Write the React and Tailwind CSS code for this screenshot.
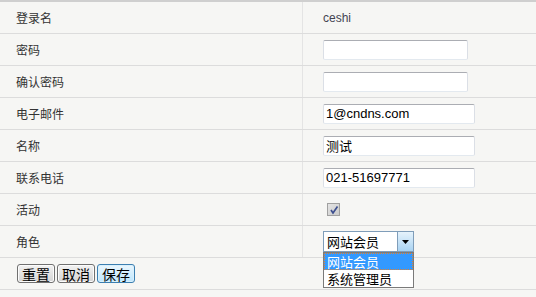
import React from "react";

const cjk = { fontFamily: '"Noto Sans CJK SC", "Liberation Sans", sans-serif' };

function Input({ value, w }) {
  return (
    <div
      className={`h-[20px] ${w} flex items-center rounded-[2px] border border-t-[#abadb3] border-l-[#dbdfe6] border-r-[#dbdfe6] border-b-[#e3e9ef] bg-white px-[2px] text-[13px] leading-none text-black`}
      style={{ fontFamily: '"Liberation Sans", "Noto Sans CJK SC", sans-serif' }}
    >
      {value}
    </div>
  );
}

function Row({ label, children }) {
  return (
    <div className="flex h-[32px] border-b border-[#dcdcdc]">
      <div className="flex w-[303px] items-center border-r border-[#e4e4e4] pl-4 text-[12px] text-[#333]" style={cjk}>
        {label}
      </div>
      <div className="relative flex flex-1 items-center pl-5">{children}</div>
    </div>
  );
}

function Btn({ children, focus }) {
  return (
    <button
      className={`h-[19px] rounded-[3px] border px-[4px] text-[14px] leading-none text-black ${
        focus
          ? "border-[#3c7fb1] bg-gradient-to-b from-[#eaf6fd] to-[#bee6fd] shadow-[inset_0_0_0_1px_#d9f0fc]"
          : "border-[#707070] bg-gradient-to-b from-[#f2f2f2] to-[#d4d4d4] shadow-[inset_0_0_0_1px_#fcfcfc]"
      }`}
      style={cjk}
    >
      {children}
    </button>
  );
}

export default function App() {
  return (
    <div className="relative h-[297px] w-[536px] overflow-hidden bg-[#f6f6f4]">
      <div className="border-t-2 border-[#cfcfcf]">
        <Row label="登录名">
          <span className="text-[12px] text-[#444452]" style={{ fontFamily: '"Liberation Sans", sans-serif' }}>
            ceshi
          </span>
        </Row>
        <Row label="密码">
          <Input value="" w="w-[145px]" />
        </Row>
        <Row label="确认密码">
          <Input value="" w="w-[145px]" />
        </Row>
        <Row label="电子邮件">
          <Input value="1@cndns.com" w="w-[152px]" />
        </Row>
        <Row label="名称">
          <Input value={<span style={cjk}>测试</span>} w="w-[152px]" />
        </Row>
        <Row label="联系电话">
          <Input value="021-51697771" w="w-[152px]" />
        </Row>
        <Row label="活动">
          <div className="ml-[4px] flex h-[13px] w-[13px] items-center justify-center border border-[#a0a0a0] bg-gradient-to-br from-[#e4e4e4] to-[#cacaca]">
            <svg width="10" height="10" viewBox="0 0 10 10">
              <path d="M2 5 L4 8 L8.5 1.5" fill="none" stroke="#3d4f8f" strokeWidth="1.7" />
            </svg>
          </div>
        </Row>
        <Row label="角色">
          <div className="flex h-[21px] w-[91px] border border-[#7f9db9] bg-white">
            <div className="flex flex-1 items-center pl-[3px] text-[13px] leading-none text-black" style={cjk}>
              网站会员
            </div>
            <div className="flex w-[16px] items-center justify-center border-l border-[#7f9db9] bg-gradient-to-b from-[#e6f3fc] to-[#a9d3f2]">
              <svg width="7" height="4" viewBox="0 0 7 4">
                <path d="M0 0 H7 L3.5 4 Z" fill="#000" />
              </svg>
            </div>
          </div>
        </Row>
        <div className="flex h-[32px] items-center gap-[2px] border-b border-[#dcdcdc] pl-[17px]">
          <Btn>重置</Btn>
          <Btn>取消</Btn>
          <Btn focus>保存</Btn>
        </div>
      </div>
      <div
        className="absolute left-[323px] top-[252px] w-[91px] border border-[#7a7a7a] bg-white text-[13px] leading-none"
        style={cjk}
      >
        <div className="flex h-[17px] items-center border border-dotted border-[#e08030] bg-[#3399ff] pl-[2px] text-white">
          网站会员
        </div>
        <div className="flex h-[17px] items-center pl-[3px] text-black">系统管理员</div>
      </div>
    </div>
  );
}
